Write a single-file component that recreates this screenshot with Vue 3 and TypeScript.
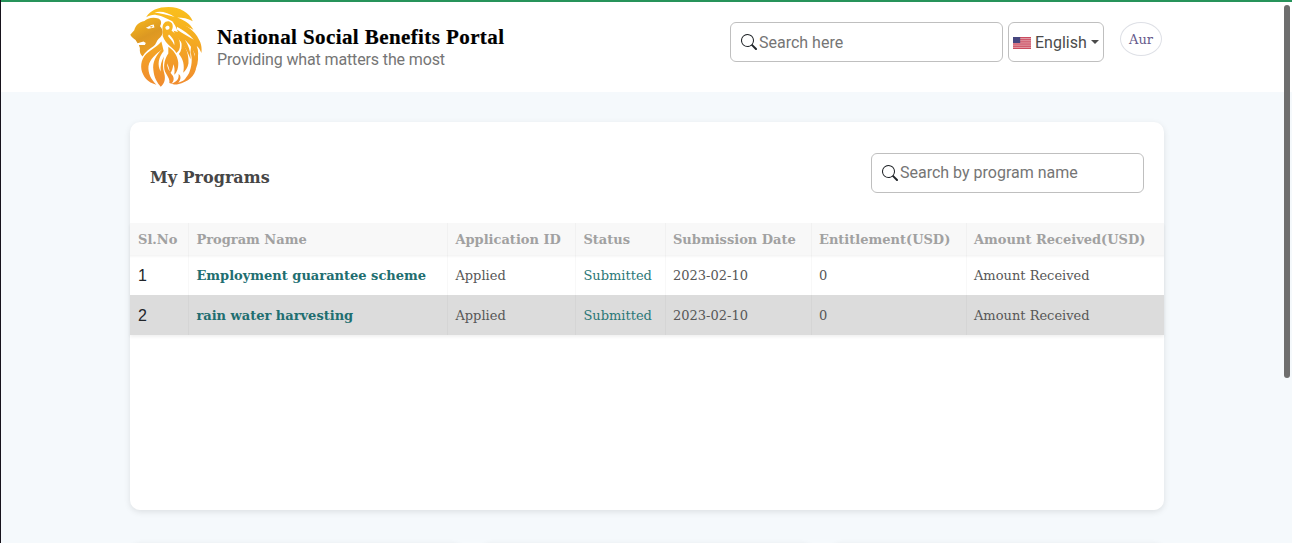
<script setup lang="ts">
interface Program {
  name: string
  application: string
  status: string
  date: string
  entitlement: number
  amount: string
}

const columns: string[] = ['Sl.No', 'Program Name', 'Application ID', 'Status', 'Submission Date', 'Entitlement(USD)', 'Amount Received(USD)']

const programs: Program[] = [
  { name: 'Employment guarantee scheme', application: 'Applied', status: 'Submitted', date: '2023-02-10', entitlement: 0, amount: 'Amount Received' },
  { name: 'rain water harvesting', application: 'Applied', status: 'Submitted', date: '2023-02-10', entitlement: 0, amount: 'Amount Received' },
]
</script>

<template>
  <div class="page">
    <header class="topbar">
      <div class="brand">
        <svg class="lion" viewBox="6 8 216 242" aria-hidden="true">
          <defs>
            <linearGradient id="gold" gradientUnits="userSpaceOnUse" x1="0" y1="8" x2="0" y2="250">
              <stop offset="0" stop-color="#fac01c" />
              <stop offset="0.45" stop-color="#f4a922" />
              <stop offset="1" stop-color="#f08a30" />
            </linearGradient>
            <linearGradient id="face" gradientUnits="userSpaceOnUse" x1="20" y1="50" x2="70" y2="150">
              <stop offset="0" stop-color="#f3b41e" />
              <stop offset="0.5" stop-color="#dc9822" />
              <stop offset="1" stop-color="#ee9f25" />
            </linearGradient>
          </defs>
          <!-- crest -->
          <path fill="url(#gold)" d="M54 39C66 18 90 8 122 8C157 9 184 24 195 51C180 43 164 40 148 40C167 47 186 57 197 77C176 66 158 59 140 54C122 46 108 36 84 32C72 31 63 34 54 39Z" />
          <path fill="#fff" d="M79 25C97 18 120 25 140 38C118 32 98 27 79 25Z" />
          <!-- face -->
          <path fill="url(#face)" d="M49 50C56 41 77 37 91 43C101 48 101 58 96 66C109 80 105 94 92 104C85 110 84 122 76 127C65 134 51 143 43 158C36 151 34 144 35 132L32 123L50 123L53 117L46 112L28 118L22 108C15 102 9 98 6 92L18 78C22 63 31 54 49 50Z" />
          <path fill="#fff" d="M53 71C61 69 66 62 77 61L79 70L61 74Z" />
          <path fill="#f3ab22" d="M64 68L75 65L70 71Z" />
          <!-- ear and cheek -->
          <path fill="url(#gold)" fill-rule="evenodd" d="M104 80C101 60 110 50 122 51C134 53 138 66 131 80C148 91 159 108 156 130C154 140 150 144 145 147C139 132 113 123 104 96ZM112 69C112 77 119 79 124 74C127 66 120 60 112 69ZM120 96C126 104 134 110 139 124C142 111 132 99 123 91Z" />
          <!-- back mane -->
          <path fill="url(#gold)" d="M133 50C166 54 202 78 214 107C221 119 223 132 221 147C217 137 213 131 207 126C212 140 213 153 208 170C202 147 190 124 171 107C183 125 190 147 188 166C180 140 164 117 143 95L137 80L150 84L142 65Z" />
          <path fill="#fff" d="M147 68C167 79 184 90 198 107C181 97 163 88 147 76Z" />
          <path fill="url(#gold)" d="M160 111C176 132 183 153 182 178C180 191 173 200 166 207C171 185 166 165 153 150C161 141 163 128 160 111ZM190 124C204 151 206 184 183 210C192 187 195 166 188 145ZM208 134C218 178 204 216 164 235C188 208 198 183 201 150Z" />
          <!-- left lower mane -->
          <path fill="url(#gold)" d="M100 112C88 128 68 136 54 150C37 167 35 193 45 212C54 231 68 238 85 243C69 227 59 208 61 187C65 165 83 152 102 136C84 154 72 175 76 200C78 222 87 236 98 249C110 240 113 225 109 210C103 192 104 175 108 158C100 172 96 185 98 203C87 184 91 161 107 141Z" />
          <!-- right lower mane -->
          <path fill="url(#gold)" d="M121 128C135 137 149 153 151 175C152 190 148 205 139 213C141 198 140 188 136 181C135 193 132 202 126 210C125 195 121 186 117 178C117 190 124 203 135 217C139 224 138 234 130 240C147 235 154 225 152 211C160 216 160 228 151 237C178 229 192 215 205 191C202 218 181 234 150 242C140 244 132 241 124 238C127 226 117 216 111 203C105 186 110 165 121 149Z" />
        </svg>
        <div class="brand-text">
          <div class="title">National Social Benefits Portal</div>
          <div class="tagline">Providing what matters the most</div>
        </div>
      </div>
      <div class="tools">
        <label class="search">
          <svg viewBox="0 0 16 16"><path d="M11.742 10.344a6.5 6.5 0 1 0-1.397 1.398h-.001c.03.04.062.078.098.115l3.85 3.85a1 1 0 0 0 1.415-1.414l-3.85-3.85a1.007 1.007 0 0 0-.115-.1zM12 6.5a5.5 5.5 0 1 1-11 0 5.5 5.5 0 0 1 11 0z" /></svg>
          <input type="text" placeholder="Search here" />
        </label>
        <button class="language">
          <svg class="flag" viewBox="0 0 18 12" aria-hidden="true">
            <rect width="18" height="12" fill="#e5a9b3" />
            <path d="M0 .5H18M0 2.35H18M0 4.2H18M0 6.05H18M0 7.9H18M0 9.7H18M0 11.5H18" stroke="#c9475b" stroke-width=".95" />
            <rect width="7.2" height="6" fill="#46467f" />
          </svg>
          <span>English</span>
          <i class="caret"></i>
        </button>
        <div class="avatar">Aur</div>
      </div>
    </header>

    <main class="content">
      <section class="card">
        <div class="card-head">
          <h2>My Programs</h2>
          <label class="search">
            <svg viewBox="0 0 16 16"><path d="M11.742 10.344a6.5 6.5 0 1 0-1.397 1.398h-.001c.03.04.062.078.098.115l3.85 3.85a1 1 0 0 0 1.415-1.414l-3.85-3.85a1.007 1.007 0 0 0-.115-.1zM12 6.5a5.5 5.5 0 1 1-11 0 5.5 5.5 0 0 1 11 0z" /></svg>
            <input type="text" placeholder="Search by program name" />
          </label>
        </div>
        <table>
          <colgroup>
            <col class="c-no" /><col class="c-name" /><col class="c-app" /><col class="c-status" /><col class="c-date" /><col class="c-ent" /><col />
          </colgroup>
          <thead>
            <tr><th v-for="c in columns" :key="c">{{ c }}</th></tr>
          </thead>
          <tbody>
            <tr v-for="(p, i) in programs" :key="p.name">
              <td class="no">{{ i + 1 }}</td>
              <td class="name">{{ p.name }}</td>
              <td>{{ p.application }}</td>
              <td class="status">{{ p.status }}</td>
              <td>{{ p.date }}</td>
              <td>{{ p.entitlement }}</td>
              <td>{{ p.amount }}</td>
            </tr>
          </tbody>
        </table>
      </section>
      <div class="tiles"><div v-for="n in 3" :key="n" class="tile"></div></div>
    </main>
    <div class="scrollbar"></div>
  </div>
</template>

<style>
body {
  margin: 0;
  overflow: hidden;
}
</style>

<style scoped>
.page {
  position: relative;
  box-sizing: border-box;
  height: 543px;
  overflow: hidden;
  background: #f5f9fc;
  border-left: 1px solid #17131c;
  font-family: "DejaVu Serif", serif;
}
.topbar {
  box-sizing: border-box;
  height: 92px;
  display: flex;
  justify-content: space-between;
  padding: 0 130px 0 129px;
  background: #fff;
  border-top: 2px solid #26935a;
}
.brand {
  display: flex;
}
.lion {
  width: 72px;
  height: 80px;
  margin-top: 5px;
}
.brand-text {
  margin: 23px 0 0 15px;
  white-space: nowrap;
}
.title {
  font: bold 21px/24px "Liberation Serif", serif;
  letter-spacing: 0.41px;
  -webkit-text-stroke: 0.2px #000;
  color: #000;
}
.tagline {
  font: 16px/22px Roboto, sans-serif;
  letter-spacing: -0.13px;
  color: #757575;
}
.tools {
  display: flex;
  align-items: flex-start;
  padding-top: 20px;
}
.search {
  box-sizing: border-box;
  width: 273px;
  height: 40px;
  display: flex;
  align-items: center;
  padding: 0 10px;
  background: #fff;
  border: 1px solid #bfbfbf;
  border-radius: 6px;
}
.search svg {
  width: 16px;
  height: 16px;
  flex: none;
  fill: #212529;
  margin-right: 2px;
}
.search input {
  flex: 1;
  min-width: 0;
  padding: 0;
  border: 0;
  outline: 0;
  background: none;
  font: 16px/24px Roboto, sans-serif;
}
.tools .search input {
  padding-top: 2px;
}
.search input::placeholder {
  color: #757575;
  opacity: 1;
}
.language {
  box-sizing: border-box;
  width: 96px;
  height: 40px;
  margin-left: 5px;
  padding: 0 4px;
  display: flex;
  align-items: center;
  background: #fff;
  border: 1px solid #bfbfbf;
  border-radius: 6px;
  font: 16px/24px Roboto, sans-serif;
  color: #4b4b4b;
}
.language span {
  padding-top: 2px;
}
.flag {
  width: 18px;
  height: 12px;
  margin: 2px 4px 0 0;
}
.caret {
  margin-left: 4px;
  border: 4px solid transparent;
  border-top-color: #4b4b4b;
  border-bottom: 0;
}
.avatar {
  box-sizing: border-box;
  width: 42px;
  height: 34px;
  margin-left: 16px;
  border: 1px solid #dee0e6;
  border-radius: 50%;
  font-size: 13px;
  line-height: 34px;
  text-align: center;
  color: #65598b;
}
.content {
  padding: 30px 128px 0 129px;
}
.card {
  height: 388px;
  background: #fff;
  border-radius: 10px;
  box-shadow: 0 2px 6px rgba(0, 0, 0, 0.1);
}
.card-head {
  height: 101px;
  box-sizing: border-box;
  display: flex;
  justify-content: space-between;
  padding: 31px 20px 0;
}
h2 {
  margin: 15px 0 0;
  font-size: 16px;
  line-height: 20px;
  color: #464646;
}
table {
  width: 100%;
  table-layout: fixed;
  border-collapse: separate;
  border-spacing: 0;
  font-size: 13px;
  color: #575757;
  box-shadow: 0 2px 3px rgba(0, 0, 0, 0.06);
}
.c-no { width: 58.4px; }
.c-name { width: 259px; }
.c-app { width: 128px; }
.c-status { width: 89.6px; }
.c-date { width: 146px; }
.c-ent { width: 155px; }
th,
td {
  box-sizing: border-box;
  padding: 0 8px;
  text-align: left;
  white-space: nowrap;
}
th {
  height: 32px;
  background: #f8f8f8;
  color: #a1a1a1;
}
td {
  height: 40px;
}
th + th,
td + td {
  box-shadow: inset 2px 0 1px -1px rgba(0, 0, 0, 0.03);
}
tbody tr:first-child {
  background: linear-gradient(#f3f3f3, #fff 3px);
}
tbody tr:nth-child(2) {
  background: #dcdcdc;
}
.no {
  font: 16px "Liberation Sans", sans-serif;
  padding-top: 2px;
  color: #212529;
}
.name {
  font-weight: bold;
  color: #216e70;
}
.status {
  color: #2b7777;
}
.tiles {
  display: grid;
  grid-template-columns: repeat(3, 1fr);
  gap: 18px;
  margin-top: 33px;
}
.tile {
  height: 200px;
  border-radius: 10px;
  background: #fff;
  box-shadow: 0 2px 6px rgba(0, 0, 0, 0.1);
}
.scrollbar {
  position: absolute;
  top: 5px;
  right: 2px;
  width: 6px;
  height: 373px;
  border-radius: 3px;
  background: #6e6e6e;
}
</style>
